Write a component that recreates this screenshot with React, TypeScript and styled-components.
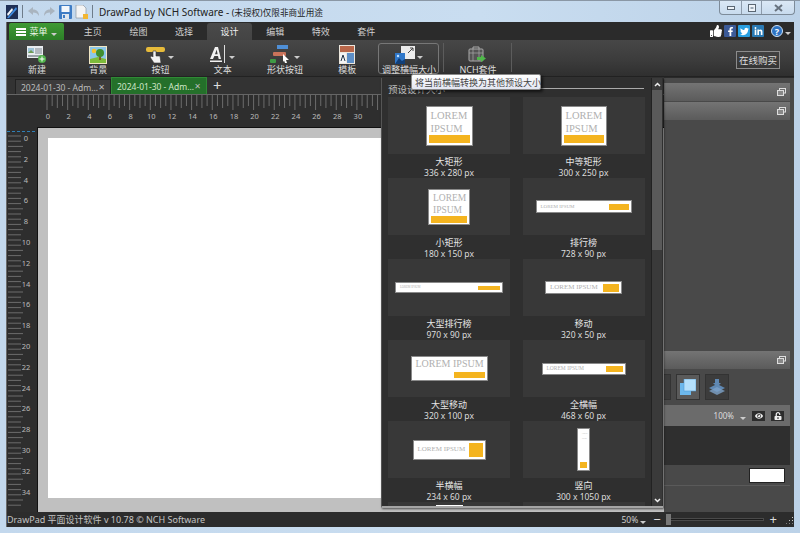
import React from "react";
import styled, { createGlobalStyle } from "styled-components";
import { FaThumbsUp, FaFacebookF, FaTwitter, FaLinkedinIn, FaEye, FaUnlockAlt } from "react-icons/fa";

const FONT = `"Noto Sans", "Noto Sans CJK SC", sans-serif`;

const Global = createGlobalStyle`
  html, body { margin: 0; padding: 0; background: #c5daee; }
  * { box-sizing: border-box; }
`;

const Frame = styled.div`
  position: relative;
  width: 800px;
  height: 533px;
  overflow: hidden;
  padding: 0 6px 6px;
  display: flex;
  flex-direction: column;
  font-family: ${FONT};
  background: linear-gradient(90deg, #c3d8ed 0%, #c9ddf0 60%, #bcd2e8 100%);
  border-top: 1px solid #8a97a5;
`;

const TitleBar = styled.div`
  height: 21px;
  flex: none;
  display: flex;
  align-items: center;
  gap: 3px;
  color: #222;
  font-size: 10px;
`;

const TitleSep = styled.span`
  width: 1px;
  height: 13px;
  background: #6e7c8a;
  margin: 0 1px;
`;

const TitleText = styled.span`
  margin-left: 2px;
  white-space: nowrap;
`;

const TitleNote = styled.span`
  font-size: 8.6px;
`;

const WinControls = styled.div`
  margin-left: auto;
  margin-right: -1px;
  align-self: flex-start;
  display: flex;
  height: 14px;
  border: 1px solid #7d8b99;
  border-top: none;
  border-radius: 0 0 4px 4px;
  background: linear-gradient(#dbe8f5, #c8dbee);
`;

const WinButton = styled.div<{ $w: number }>`
  width: ${(p) => p.$w}px;
  display: flex;
  align-items: center;
  justify-content: center;
  border-left: 1px solid #8d9bab;
  &:first-child { border-left: none; }
`;

const Shell = styled.div`
  flex: 1;
  min-height: 0;
  display: flex;
  flex-direction: column;
  background: #333;
  border-left: 1px solid #6b6b6b;
`;

const TabBar = styled.div`
  height: 18px;
  flex: none;
  display: flex;
  align-items: flex-end;
  padding-left: 2px;
  background: #2b2b2b;
`;

const MenuButton = styled.div`
  width: 55px;
  height: 17px;
  display: flex;
  align-items: center;
  justify-content: center;
  gap: 3px;
  color: #eef7e8;
  font-size: 9px;
  background: linear-gradient(#3f9a35, #2c7f27);
  border-radius: 2px 2px 0 0;
`;

const Burger = styled.span`
  width: 10px;
  height: 8px;
  border-top: 2px solid #fff;
  border-bottom: 2px solid #fff;
  position: relative;
  &::after {
    content: "";
    position: absolute;
    left: 0;
    right: 0;
    top: 1px;
    height: 2px;
    background: #fff;
  }
`;

const Tab = styled.div<{ $active?: boolean }>`
  width: 45.6px;
  height: 17px;
  display: flex;
  align-items: center;
  justify-content: center;
  font-size: 9px;
  color: ${(p) => (p.$active ? "#f0f0f0" : "#d0d0d0")};
  background: ${(p) => (p.$active ? "linear-gradient(#4a4a4a, #444)" : "transparent")};
  border-radius: 3px 3px 0 0;
`;

const TabRow = styled.div`
  display: flex;
  margin-left: 6px;
  flex: 1;
  align-items: flex-end;
`;

const SocialRow = styled.div`
  display: flex;
  align-items: center;
  gap: 2px;
  margin-right: 3px;
  align-self: center;
`;

const Social = styled.span<{ $bg: string }>`
  width: 12px;
  height: 12px;
  display: flex;
  align-items: center;
  justify-content: center;
  color: #fff;
  font-size: 9px;
  border-radius: 1px;
  background: ${(p) => p.$bg};
`;

const HelpDot = styled.span`
  width: 12px;
  height: 12px;
  margin-left: 5px;
  border-radius: 50%;
  display: flex;
  align-items: center;
  justify-content: center;
  color: #fff;
  background: #2e74c4;
  border: 1px solid #cfe2f6;
  font-size: 9px;
  font-weight: 700;
`;

const Ribbon = styled.div`
  height: 37px;
  flex: none;
  display: flex;
  align-items: stretch;
  padding-top: 3px;
  background: linear-gradient(#474747, #3c3c3c 55%, #2f2f2f);
  border-bottom: 1px solid #222;
`;

const RibbonButton = styled.div<{ $active?: boolean; $w?: number }>`
  width: ${(p) => p.$w ?? 62.3}px;
  height: 31px;
  flex: none;
  display: flex;
  flex-direction: column;
  align-items: center;
  color: #ddd;
  font-size: 9px;
  line-height: 10px;
  white-space: nowrap;
  border: 1px solid ${(p) => (p.$active ? "#777" : "transparent")};
  border-radius: 3px;
`;

const IconWrap = styled.div`
  height: 21px;
  flex: none;
  display: flex;
  align-items: center;
  gap: 2px;
`;

const Caret = styled.span`
  width: 0;
  height: 0;
  margin-top: 5px;
  border-left: 3px solid transparent;
  border-right: 3px solid transparent;
  border-top: 3px solid #ccc;
`;

const RibbonSep = styled.span`
  width: 1px;
  height: 29px;
  background: #5c5c5c;
  flex: none;
`;

const BuyButton = styled.div`
  margin-left: auto;
  margin-right: 14px;
  margin-top: 8px;
  width: 44px;
  height: 18px;
  display: flex;
  align-items: center;
  justify-content: center;
  font-size: 9.5px;
  color: #ddd;
  border: 1px solid #8c8c8c;
`;

const Work = styled.div`
  flex: 1;
  min-height: 0;
  display: flex;
`;

const LeftColumn = styled.div`
  flex: 1;
  min-width: 0;
  display: flex;
  flex-direction: column;
`;

const DocTabs = styled.div`
  height: 18px;
  flex: none;
  display: flex;
  align-items: flex-end;
  padding-left: 8px;
  background: #333;
  border-bottom: 1px solid #666;
`;

const DocTab = styled.div<{ $active?: boolean }>`
  width: 96px;
  height: ${(p) => (p.$active ? 17 : 15)}px;
  flex: none;
  display: flex;
  align-items: center;
  justify-content: space-between;
  padding: 0 5px;
  font-size: 8.5px;
  white-space: nowrap;
  color: ${(p) => (p.$active ? "#cfe6c8" : "#bdbdbd")};
  background: ${(p) => (p.$active ? "#24702a" : "#3c3c3c")};
  border: 1px solid ${(p) => (p.$active ? "#2f8a35" : "#222")};
  border-bottom: none;
`;

const DocClose = styled.span`
  font-size: 8px;
  font-family: "DejaVu Sans", sans-serif;
  color: #bbb;
`;

const AddTab = styled.span`
  margin: 0 0 0 6px;
  color: #ddd;
  font-size: 15px;
  line-height: 17px;
`;

const TopRuler = styled.svg`
  display: block;
  flex: none;
  width: 657px;
  height: 32px;
  background: #2e2e2e;
`;

const CanvasRow = styled.div`
  flex: 1;
  min-height: 0;
  display: flex;
`;

const SideRuler = styled.svg`
  display: block;
  flex: none;
  width: 30px;
  height: 385px;
  background: #2e2e2e;
`;

const Workspace = styled.div`
  flex: 1;
  height: 385px;
  padding: 10px 11px 12px 10px;
  background: #c0c0c0;
  border-top: 1px solid #111;
  border-left: 1px solid #111;
`;

const Page = styled.div`
  width: 400px;
  height: 360px;
  background: #fff;
`;

const SidePanel = styled.div`
  width: 130px;
  flex: none;
  display: flex;
  flex-direction: column;
  padding: 5px 4px 0 0;
  background: #494949;
  border-top: 1px solid #2a2a2a;
`;

const PanelHeader = styled.div<{ $top?: number }>`
  height: 18px;
  flex: none;
  margin-top: ${(p) => p.$top ?? 0}px;
  display: flex;
  align-items: center;
  justify-content: flex-end;
  padding-right: 4px;
  background: linear-gradient(#747474, #5b5b5b);
`;

const ToolRow = styled.div`
  height: 36px;
  flex: none;
  display: flex;
  justify-content: flex-end;
  align-items: center;
  gap: 5px;
  padding-right: 61px;
  overflow: hidden;
`;

const ToolButton = styled.div<{ $on?: boolean }>`
  width: 24px;
  height: 26px;
  flex: none;
  display: flex;
  align-items: center;
  justify-content: center;
  background: ${(p) => (p.$on ? "#5a5a5a" : "#3c3c3c")};
  border: 1px solid #333;
`;

const LayerRow = styled.div`
  height: 21px;
  flex: none;
  display: flex;
  align-items: center;
  justify-content: flex-end;
  gap: 6px;
  padding-right: 6px;
  font-size: 8px;
  color: #ddd;
  background: #6b6b6b;
`;

const SmallIcon = styled.span`
  width: 13px;
  height: 10px;
  display: flex;
  align-items: center;
  justify-content: center;
  color: #eee;
  font-size: 8px;
  background: #2c2c2c;
`;

const LayerList = styled.div`
  height: 39px;
  flex: none;
  background: #2f2f2f;
`;

const SwatchRow = styled.div`
  height: 21px;
  flex: none;
  display: flex;
  justify-content: flex-end;
  align-items: center;
  padding-right: 5px;
  border-bottom: 1px solid #5a5a5a;
`;

const Swatch = styled.div`
  width: 36px;
  height: 15px;
  background: #fff;
  border: 1px solid #222;
`;

const StatusBar = styled.div`
  height: 15px;
  flex: none;
  display: flex;
  align-items: center;
  color: #c4c4c4;
  font-size: 9px;
  white-space: nowrap;
  background: #2c2c2c;
`;

const Zoom = styled.div`
  margin-left: auto;
  display: flex;
  align-items: center;
  font-size: 8.5px;
  color: #ccc;
`;

const SliderTrack = styled.div`
  position: relative;
  width: 98px;
  height: 3px;
  margin: 0 6px 0 5px;
  background: #1c1c1c;
  border: 1px solid #4a4a4a;
`;

const SliderThumb = styled.span`
  position: absolute;
  left: -1px;
  top: -5px;
  width: 5px;
  height: 11px;
  background: #777;
`;

const ZoomSign = styled.span`
  font-size: 13px;
  line-height: 13px;
  color: #ddd;
`;

const Grip = styled.span`
  width: 8px;
  height: 8px;
  margin: 0 1px 0 8px;
  background: radial-gradient(circle, #ccc 35%, transparent 40%) 0 0 / 3px 3px;
  clip-path: polygon(100% 0, 100% 100%, 0 100%);
`;

const Popup = styled.div`
  position: absolute;
  left: 381px;
  top: 77px;
  width: 282px;
  height: 430px;
  display: flex;
  background: #2f2f2f;
  border-left: 1px solid #555;
  border-bottom: 2px solid #a5a5a5;
  box-shadow: 1px 1px 2px rgba(0, 0, 0, 0.6);
`;

const PopupBody = styled.div`
  flex: 1;
  min-width: 0;
  overflow: hidden;
  padding: 2px 7px 0 6px;
`;

const PopupTitle = styled.div`
  height: 17px;
  display: flex;
  align-items: center;
  gap: 4px;
  font-size: 9.5px;
  color: #bbb;
  white-space: nowrap;
  &::after {
    content: "";
    flex: 1;
    height: 1px;
    background: #aaa;
  }
`;

const PresetGrid = styled.div`
  display: grid;
  grid-template-columns: 122px 122px;
  column-gap: 12.5px;
  grid-auto-rows: 81px;
`;

const Preset = styled.div`
  display: flex;
  flex-direction: column;
  align-items: center;
`;

const ThumbBox = styled.div`
  width: 100%;
  height: 57px;
  flex: none;
  display: flex;
  align-items: center;
  justify-content: center;
  background: #383838;
`;

const PresetName = styled.div`
  margin-top: 2px;
  font-size: 9px;
  line-height: 12px;
  color: #e6e6e6;
`;

const PresetSize = styled.div`
  font-size: 8.5px;
  line-height: 9px;
  color: #dcdcdc;
`;

const Ad = styled.div<{ $w: number; $h: number; $dir: string }>`
  width: ${(p) => p.$w}px;
  height: ${(p) => p.$h}px;
  display: flex;
  flex-direction: ${(p) => p.$dir};
  justify-content: space-between;
  align-items: ${(p) => (p.$dir === "row" ? "center" : "stretch")};
  padding: 2px;
  background: #fff;
  border: 1px solid #8a8a8a;
  overflow: hidden;
`;

const AdText = styled.div<{ $size: number; $line?: number }>`
  font-family: "Liberation Serif", serif;
  font-size: ${(p) => p.$size}px;
  line-height: ${(p) => p.$line ?? p.$size}px;
  color: #b0b0b0;
  white-space: nowrap;
  padding-left: 2px;
`;

const AdBar = styled.div<{ $w?: number; $h: number }>`
  width: ${(p) => (p.$w ? `${p.$w}px` : "auto")};
  height: ${(p) => p.$h}px;
  flex: none;
  align-self: ${(p) => (p.$w ? "flex-end" : "stretch")};
  background: #f4b41f;
`;

const RowBar = styled(AdBar)`
  align-self: center;
`;

const Cropped = styled.div`
  width: 27px;
  height: 2px;
  margin-bottom: auto;
  margin-top: 3px;
  background: #fff;
`;

const ScrollBar = styled.div`
  width: 11px;
  margin-right: 1px;
  flex: none;
  display: flex;
  flex-direction: column;
  align-items: center;
  background: #3a3a3a;
  border-left: 1px solid #222;
`;

const ScrollArrow = styled.div<{ $end?: boolean }>`
  height: 12px;
  flex: none;
  margin-top: ${(p) => (p.$end ? "auto" : "0")};
  display: flex;
  align-items: center;
  justify-content: center;
`;

const ScrollThumb = styled.div`
  width: 100%;
  height: 160px;
  flex: none;
  background: #5a5a5a;
`;

const Tooltip = styled.div`
  position: absolute;
  left: 411px;
  top: 73px;
  width: 130px;
  height: 16px;
  display: flex;
  align-items: center;
  padding-left: 3px;
  font-size: 9px;
  color: #444;
  white-space: nowrap;
  background: linear-gradient(#fff, #e3e6f2);
  border: 1px solid #8a8a8a;
  border-radius: 2px;
  box-shadow: 2px 2px 3px rgba(0, 0, 0, 0.6);
`;

/* icons */
const AppIcon = () => (
  <svg width="12" height="14" viewBox="0 0 12 14">
    <rect width="12" height="14" fill="#1f2f55" />
    <path d="M1 13 L10 2 L11 4 L3 13Z" fill="#3f8be0" />
    <path d="M1 9 L6 3 L7 5 L2 11Z" fill="#f1f5fa" />
  </svg>
);
const ArrowIcon = ({ flip }: { flip?: boolean }) => (
  <svg width="13" height="11" viewBox="0 0 13 11" style={flip ? { transform: "scaleX(-1)" } : undefined}>
    <path d="M1 5 L6 1 V3.5 C10 3.5 12 6 12 10 C10.5 7.5 9 6.5 6 6.5 V9Z" fill="#a9b4bf" />
  </svg>
);
const SaveIcon = () => (
  <svg width="13" height="14" viewBox="0 0 13 14">
    <rect width="13" height="14" rx="1" fill="#3f7cc4" />
    <rect x="2.5" y="1" width="8" height="6" fill="#f4f7fb" />
    <rect x="3" y="9" width="7" height="5" fill="#dfe6ee" />
    <rect x="4" y="10" width="2" height="3" fill="#3f7cc4" />
  </svg>
);
const DocIcon = () => (
  <svg width="13" height="14" viewBox="0 0 13 14">
    <path d="M1 0 H8 L11 3 V13 H1Z" fill="#f4f4f4" stroke="#8f98a2" strokeWidth=".7" />
    <rect x="8" y="9" width="5" height="5" fill="#f2b632" />
  </svg>
);
const MinGlyph = () => (
  <svg width="8" height="4" viewBox="0 0 8 4">
    <rect x=".5" y=".5" width="7" height="3" fill="#eef3f8" stroke="#5b6773" />
  </svg>
);
const MaxGlyph = () => (
  <svg width="8" height="8" viewBox="0 0 8 8">
    <rect x=".5" y=".5" width="7" height="7" fill="#eef3f8" stroke="#5b6773" />
    <rect x="2.5" y="3" width="3" height="2" fill="#9aa7b4" />
  </svg>
);
const CloseGlyph = () => (
  <svg width="9" height="8" viewBox="0 0 9 8">
    <path d="M1 1 L8 7 M8 1 L1 7" stroke="#67727e" strokeWidth="2" />
  </svg>
);
const NewIcon = () => (
  <svg width="20" height="19" viewBox="0 0 20 19">
    <rect x="0" y="1" width="16" height="12" fill="#e8ecef" />
    <rect x="1" y="3" width="6" height="5" fill="#9fc4d8" />
    <path d="M1 8 L4 5 L7 8Z" fill="#6f9a52" />
    <path d="M8 4 H15 M8 6 H15 M8 8 H15" stroke="#7f8790" />
    <rect x="1" y="10" width="14" height="2" fill="#9aa2a8" />
    <circle cx="15" cy="14" r="4" fill="#4fb24a" />
    <path d="M15 11.5 V16.5 M12.5 14 H17.5" stroke="#fff" />
  </svg>
);
const BgIcon = () => (
  <svg width="18" height="18" viewBox="0 0 18 18">
    <rect width="18" height="18" fill="#f0e6c4" />
    <rect x="1" y="1" width="16" height="16" fill="#8cc8ea" />
    <circle cx="5" cy="5" r="2.3" fill="#f6c22f" />
    <path d="M1 17 V13 L9 11 L17 13 V17Z" fill="#7dbb3a" />
    <rect x="10" y="9" width="2" height="5" fill="#7a5a2c" />
    <circle cx="11" cy="7" r="4" fill="#3f8f2e" />
  </svg>
);
const ButtonIcon = () => (
  <svg width="20" height="18" viewBox="0 0 20 18">
    <rect x="0" y="1" width="19" height="5" rx="2" fill="#e7bb3a" />
    <path d="M7 5 H10 V10 H14 L15 17 H8 L4 11 L6 10 L7 11Z" fill="#f2f2f2" stroke="#333" strokeWidth=".6" />
  </svg>
);
const TextIcon = () => (
  <svg width="17" height="19" viewBox="0 0 17 19">
    <path d="M0 14 L5 2 H8 L11 14 H8.7 L8 11 H4.4 L3 14Z M5 9.3 H7.6 L6.7 4.5Z" fill="#f2f2f2" />
    <rect x="0" y="15.5" width="12" height="1.5" fill="#f2f2f2" />
    <rect x="14" y="0" width="1" height="18" fill="#ddd" />
  </svg>
);
const ShapeIcon = () => (
  <svg width="22" height="19" viewBox="0 0 22 19">
    <rect x="7" y="0" width="11" height="4" fill="#4f8fd6" />
    <rect x="3" y="7" width="13" height="4" rx="1" fill="#c9735a" />
    <rect x="0" y="14" width="6" height="4" rx="1" fill="#3f9a45" />
    <path d="M13 9 L19 15 H16 L17 18 L15 18 L14 15.5 L13 17Z" fill="#fff" />
  </svg>
);
const TemplateIcon = () => (
  <svg width="16" height="19" viewBox="0 0 16 19">
    <rect width="16" height="19" fill="#ece7de" />
    <rect x="1" y="1" width="14" height="6" fill="#b9674a" />
    <rect x="1" y="8" width="6" height="10" fill="#f4f4f4" />
    <rect x="8" y="8" width="7" height="10" fill="#5e8fc7" />
    <path d="M2 16 L4 10 L6 16" fill="none" stroke="#234" />
  </svg>
);
const ResizeIcon = () => (
  <svg width="20" height="18" viewBox="0 0 20 18">
    <rect x="6" y="0" width="14" height="13" fill="#ececec" />
    <path d="M13 7 L18 2 M15 2 H18 V5" stroke="#444" fill="none" />
    <rect x="0" y="7" width="10" height="11" fill="#2f77c9" />
    <path d="M0 18 L4 12 L7 15 L10 13 V18Z" fill="#123f78" />
    <circle cx="3" cy="10" r="1.2" fill="#bfe0ff" />
  </svg>
);
const SuiteIcon = () => (
  <svg width="19" height="18" viewBox="0 0 19 18">
    <path d="M5 3 V1 H11 V3" fill="none" stroke="#aaa" />
    <rect x="1" y="3" width="14" height="12" rx="1" fill="#555" stroke="#aaa" />
    <path d="M1 7 H15 M5 3 V15 M11 3 V15" stroke="#aaa" strokeWidth=".7" />
    <path d="M9 11 H13 V9 L18 12.5 L13 16 V14 H9Z" fill="#4fb84a" />
  </svg>
);
const PopOutIcon = () => (
  <svg width="9" height="8" viewBox="0 0 9 8">
    <rect x="2.5" y=".5" width="6" height="4.5" fill="none" stroke="#ddd" />
    <rect x=".5" y="2.5" width="6" height="5" fill="#888" stroke="#ddd" />
  </svg>
);
const Chevron = ({ down }: { down?: boolean }) => (
  <svg width="7" height="5" viewBox="0 0 7 5">
    <path d={down ? "M1 1 L3.5 3.5 L6 1" : "M1 4 L3.5 1.5 L6 4"} fill="none" stroke="#eee" strokeWidth="1.5" />
  </svg>
);
const CopyIcon = () => (
  <svg width="16" height="16" viewBox="0 0 16 16">
    <rect x="0" y="4" width="11" height="12" fill="#6db8ec" />
    <rect x="4" y="0" width="12" height="12" fill="#b5e0fb" stroke="#4f9cd8" strokeWidth=".6" />
  </svg>
);
const StackIcon = () => (
  <svg width="16" height="17" viewBox="0 0 16 17">
    <path d="M0 9 L8 5 L16 9 L8 13Z" fill="#5f88b3" />
    <path d="M0 12 L8 8 L16 12 L8 16Z" fill="#7da3c9" opacity=".8" />
    <path d="M6 0 H10 V4 H12 L8 8 L4 4 H6Z" fill="#5f88b3" />
  </svg>
);

const UNIT = 10.33;
const TICK = "#6c6c6c";

const TopTicks = () => (
  <>
    {Array.from({ length: 120 }, (_, i) => {
      const x = 40 + i * (UNIT / 2);
      const len = i % 4 === 0 ? 15 : i % 2 === 0 ? 13 : 11;
      return <line key={i} x1={x} x2={x} y1={0} y2={len} stroke={TICK} strokeWidth="1" />;
    })}
    {Array.from({ length: 16 }, (_, i) => (
      <text key={i} x={41 + i * 2 * UNIT} y={24} fontSize="7.5" fill="#bbb" textAnchor="middle" fontFamily={FONT}>
        {i * 2}
      </text>
    ))}
  </>
);

const SideTicks = () => (
  <>
    <line x1={0} x2={30} y1={4.5} y2={4.5} stroke="#2f7fb5" strokeWidth="1" strokeDasharray="3 2" />
    {Array.from({ length: 72 }, (_, i) => {
      const y = 9 + i * 5.2;
      const len = i % 4 === 2 ? 15 : 13;
      return <line key={i} x1={1} x2={1 + len} y1={y} y2={y} stroke={TICK} strokeWidth="1" />;
    })}
    {Array.from({ length: 18 }, (_, i) => (
      <text key={i} x={19} y={14 + i * 20.8} fontSize="7.5" fill="#bbb" textAnchor="middle" fontFamily={FONT}>
        {i * 2}
      </text>
    ))}
  </>
);

const tabs = ["主页", "绘图", "选择", "设计", "编辑", "特效", "套件"];

const App: React.FC = () => {
  return (
    <Frame>
      <Global />
      <TitleBar>
        <AppIcon />
        <TitleSep />
        <ArrowIcon />
        <ArrowIcon flip />
        <SaveIcon />
        <DocIcon />
        <TitleSep />
        <TitleText>DrawPad by NCH Software - <TitleNote>(未授权)仅限非商业用途</TitleNote></TitleText>
        <WinControls>
          <WinButton $w={21}><MinGlyph /></WinButton>
          <WinButton $w={20}><MaxGlyph /></WinButton>
          <WinButton $w={33}><CloseGlyph /></WinButton>
        </WinControls>
      </TitleBar>
      <Shell>
        <TabBar>
          <MenuButton>
            <Burger />
            菜单
            <Caret />
          </MenuButton>
          <TabRow>
            {tabs.map((t) => (
              <Tab key={t} $active={t === "设计"}>
                {t}
              </Tab>
            ))}
          </TabRow>
          <SocialRow>
            <FaThumbsUp color="#fff" size={12} />
            <Social $bg="#3b5a98"><FaFacebookF /></Social>
            <Social $bg="#2a9fe0"><FaTwitter /></Social>
            <Social $bg="#2b7bb5"><FaLinkedinIn /></Social>
            <HelpDot>?</HelpDot>
            <Caret />
          </SocialRow>
        </TabBar>
        <Ribbon>
          <RibbonButton $w={60}><IconWrap><NewIcon /></IconWrap>新建</RibbonButton>
          <RibbonButton><IconWrap><BgIcon /></IconWrap>背景</RibbonButton>
          <RibbonButton><IconWrap><ButtonIcon /><Caret /></IconWrap>按钮</RibbonButton>
          <RibbonButton><IconWrap><TextIcon /><Caret /></IconWrap>文本</RibbonButton>
          <RibbonButton><IconWrap><ShapeIcon /><Caret /></IconWrap>形状按钮</RibbonButton>
          <RibbonButton><IconWrap><TemplateIcon /></IconWrap>模板</RibbonButton>
          <RibbonButton $active $w={61}><IconWrap><ResizeIcon /><Caret /></IconWrap>调整横幅大小</RibbonButton>
          <RibbonButton $w={4} />
          <RibbonSep />
          <RibbonButton $w={67}><IconWrap><SuiteIcon /></IconWrap>NCH套件</RibbonButton>
          <RibbonSep />
          <BuyButton>在线购买</BuyButton>
        </Ribbon>
        <Work>
          <LeftColumn>
            <DocTabs>
              <DocTab>2024-01-30 - Adm...<DocClose>✕</DocClose></DocTab>
              <DocTab $active>2024-01-30 - Adm...<DocClose>✕</DocClose></DocTab>
              <AddTab>+</AddTab>
            </DocTabs>
            <TopRuler><TopTicks /></TopRuler>
            <CanvasRow>
              <SideRuler><SideTicks /></SideRuler>
              <Workspace><Page /></Workspace>
            </CanvasRow>
          </LeftColumn>
          <SidePanel>
            <PanelHeader><PopOutIcon /></PanelHeader>
            <PanelHeader $top={1}><PopOutIcon /></PanelHeader>
            <PanelHeader $top={231}><PopOutIcon /></PanelHeader>
            <ToolRow>
              <ToolButton />
              <ToolButton $on><CopyIcon /></ToolButton>
              <ToolButton><StackIcon /></ToolButton>
            </ToolRow>
            <LayerRow>
              100%
              <Caret />
              <SmallIcon><FaEye /></SmallIcon>
              <SmallIcon><FaUnlockAlt /></SmallIcon>
            </LayerRow>
            <LayerList />
            <SwatchRow><Swatch /></SwatchRow>
          </SidePanel>
        </Work>
        <StatusBar>
          DrawPad 平面设计软件 v 10.78 © NCH Software
          <Zoom>
            50%&nbsp;
            <Caret />
            &nbsp;&nbsp;&nbsp;
            <ZoomSign>−</ZoomSign>
            <SliderTrack><SliderThumb /></SliderTrack>
            <ZoomSign>+</ZoomSign>
            <Grip />
          </Zoom>
        </StatusBar>
      </Shell>

      <Popup>
        <PopupBody>
          <PopupTitle>预设设计大小</PopupTitle>
          <PresetGrid>
            <Preset>
              <ThumbBox>
                <Ad $w={47} $h={40} $dir="column">
                  <AdText $size={10.5} $line={13}>LOREM<br />IPSUM</AdText>
                  <AdBar $h={8} />
                </Ad>
              </ThumbBox>
              <PresetName>大矩形</PresetName>
              <PresetSize>336 x 280 px</PresetSize>
            </Preset>
            <Preset>
              <ThumbBox>
                <Ad $w={46} $h={40} $dir="column">
                  <AdText $size={10.5} $line={13}>LOREM<br />IPSUM</AdText>
                  <AdBar $h={8} />
                </Ad>
              </ThumbBox>
              <PresetName>中等矩形</PresetName>
              <PresetSize>300 x 250 px</PresetSize>
            </Preset>
            <Preset>
              <ThumbBox>
                <Ad $w={42} $h={36} $dir="column">
                  <AdText $size={9.5} $line={12}>LOREM<br />IPSUM</AdText>
                  <AdBar $h={7} />
                </Ad>
              </ThumbBox>
              <PresetName>小矩形</PresetName>
              <PresetSize>180 x 150 px</PresetSize>
            </Preset>
            <Preset>
              <ThumbBox>
                <Ad $w={96} $h={13} $dir="row">
                  <AdText $size={5}>LOREM IPSUM</AdText>
                  <RowBar $w={20} $h={6} />
                </Ad>
              </ThumbBox>
              <PresetName>排行榜</PresetName>
              <PresetSize>728 x 90 px</PresetSize>
            </Preset>
            <Preset>
              <ThumbBox>
                <Ad $w={108} $h={11} $dir="row">
                  <AdText $size={3}>LOREM IPSUM</AdText>
                  <RowBar $w={22} $h={4} />
                </Ad>
              </ThumbBox>
              <PresetName>大型排行榜</PresetName>
              <PresetSize>970 x 90 px</PresetSize>
            </Preset>
            <Preset>
              <ThumbBox>
                <Ad $w={77} $h={13} $dir="row">
                  <AdText $size={7}>LOREM IPSUM</AdText>
                  <RowBar $w={16} $h={8} />
                </Ad>
              </ThumbBox>
              <PresetName>移动</PresetName>
              <PresetSize>320 x 50 px</PresetSize>
            </Preset>
            <Preset>
              <ThumbBox>
                <Ad $w={77} $h={25} $dir="column">
                  <AdText $size={10}>LOREM IPSUM</AdText>
                  <AdBar $w={31} $h={6} />
                </Ad>
              </ThumbBox>
              <PresetName>大型移动</PresetName>
              <PresetSize>320 x 100 px</PresetSize>
            </Preset>
            <Preset>
              <ThumbBox>
                <Ad $w={84} $h={12} $dir="row">
                  <AdText $size={5.5}>LOREM IPSUM</AdText>
                  <RowBar $w={17} $h={6} />
                </Ad>
              </ThumbBox>
              <PresetName>全横幅</PresetName>
              <PresetSize>468 x 60 px</PresetSize>
            </Preset>
            <Preset>
              <ThumbBox>
                <Ad $w={73} $h={20} $dir="row">
                  <AdText $size={7}>LOREM IPSUM</AdText>
                  <RowBar $w={14} $h={14} />
                </Ad>
              </ThumbBox>
              <PresetName>半横幅</PresetName>
              <PresetSize>234 x 60 px</PresetSize>
            </Preset>
            <Preset>
              <ThumbBox>
                <Ad $w={13} $h={43} $dir="column">
                  <AdText $size={1.5} $line={5}>LOREM<br />IPSUM</AdText>
                  <AdBar $h={6} />
                </Ad>
              </ThumbBox>
              <PresetName>竖向</PresetName>
              <PresetSize>300 x 1050 px</PresetSize>
            </Preset>
            <Preset>
              <ThumbBox><Cropped /></ThumbBox>
            </Preset>
            <Preset>
              <ThumbBox />
            </Preset>
          </PresetGrid>
        </PopupBody>
        <ScrollBar>
          <ScrollArrow><Chevron /></ScrollArrow>
          <ScrollThumb />
          <ScrollArrow $end><Chevron down /></ScrollArrow>
        </ScrollBar>
      </Popup>
      <Tooltip>将当前横幅转换为其他预设大小</Tooltip>
    </Frame>
  );
};

export default App;
